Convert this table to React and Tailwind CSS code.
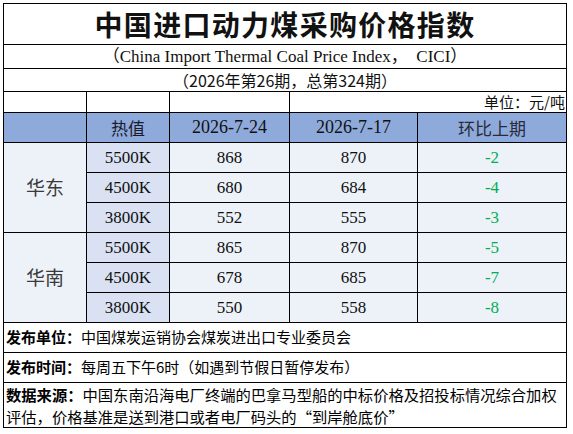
const rows = [
  { region: "华东", items: [
    ["5500K", "868", "870", "-2"],
    ["4500K", "680", "684", "-4"],
    ["3800K", "552", "555", "-3"],
  ]},
  { region: "华南", items: [
    ["5500K", "865", "870", "-5"],
    ["4500K", "678", "685", "-7"],
    ["3800K", "550", "558", "-8"],
  ]},
];

const cjk = "font-['Noto_Sans_CJK_SC',sans-serif]";
const serif = "font-['Liberation_Serif','Noto_Sans_CJK_SC',serif]";

export default function App() {
  return (
    <div className="w-[573px] h-[434px] bg-white pt-[3px] pl-[3px]">
      <div className="grid w-[564px] bg-black gap-px p-px grid-cols-[82px_82px_119px_127px_148px] grid-rows-[40px_23px_22px_20px_29px_29px_29px_29px_29px_29px_29px_29px_29px_44px]">

        <div className={`col-span-5 bg-white flex items-center justify-center text-[28px] font-bold tracking-[1.3px] text-[#111] ${cjk}`}>
          中国进口动力煤采购价格指数
        </div>

        <div className={`col-span-5 bg-white flex items-center justify-center text-[17px] text-[#111] whitespace-pre ${serif}`}>
          （China Import Thermal Coal Price Index，  CICI）
        </div>

        <div className={`col-span-5 bg-white flex items-center justify-center text-[16px] text-[#111] ${cjk}`}>
          （2026年第26期，总第324期）
        </div>

        <div className="bg-white" />
        <div className="bg-white" />
        <div className="bg-white" />
        <div className={`col-span-2 bg-white flex items-center justify-end pr-px text-[15px] text-[#111] ${cjk}`}>
          单位：元/吨
        </div>

        <div className="bg-[#8eaadb]" />
        <div className={`bg-[#8eaadb] flex items-center justify-center text-[17px] text-[#1a1a2e] ${cjk}`}>热值</div>
        <div className={`bg-[#8eaadb] flex items-center justify-center text-[18px] text-[#111] ${serif}`}>2026-7-24</div>
        <div className={`bg-[#8eaadb] flex items-center justify-center text-[18px] text-[#111] ${serif}`}>2026-7-17</div>
        <div className={`bg-[#8eaadb] flex items-center justify-center text-[17px] text-[#2a2a3a] ${cjk}`}>环比上期</div>

        {rows.map((g) => (
          <>
            <div key={g.region} className={`row-span-3 bg-[#edf2f9] flex items-center justify-center text-[19px] text-[#3a3a3a] ${cjk}`}>
              {g.region}
            </div>
            {g.items.map((r) => (
              <>
                <div className={`bg-[#d9e1f2] flex items-center justify-center text-[17px] text-[#111] ${serif}`}>{r[0]}</div>
                <div className={`bg-[#edf2f9] flex items-center justify-center text-[17px] text-[#111] ${serif}`}>{r[1]}</div>
                <div className={`bg-[#edf2f9] flex items-center justify-center text-[17px] text-[#111] ${serif}`}>{r[2]}</div>
                <div className={`bg-[#edf2f9] flex items-center justify-center text-[17px] text-[#00b050] ${serif}`}>{r[3]}</div>
              </>
            ))}
          </>
        ))}

        <div className={`col-span-5 bg-white flex items-center pl-[2px] text-[15px] text-black ${cjk}`}>
          <span className="font-bold">发布单位：</span>中国煤炭运销协会煤炭进出口专业委员会
        </div>
        <div className={`col-span-5 bg-white flex items-center pl-[2px] text-[15px] text-black ${cjk}`}>
          <span className="font-bold">发布时间：</span>每周五下午6时（如遇到节假日暂停发布）
        </div>
        <div className={`col-span-5 bg-white pl-[2px] text-[15.3px] leading-[22px] text-black whitespace-nowrap ${cjk}`}>
          <div><span className="font-bold">数据来源：</span>中国东南沿海电厂终端的巴拿马型船的中标价格及招投标情况综合加权</div>
          <div>评估，价格基准是送到港口或者电厂码头的“到岸舱底价”</div>
        </div>
      </div>
    </div>
  );
}
